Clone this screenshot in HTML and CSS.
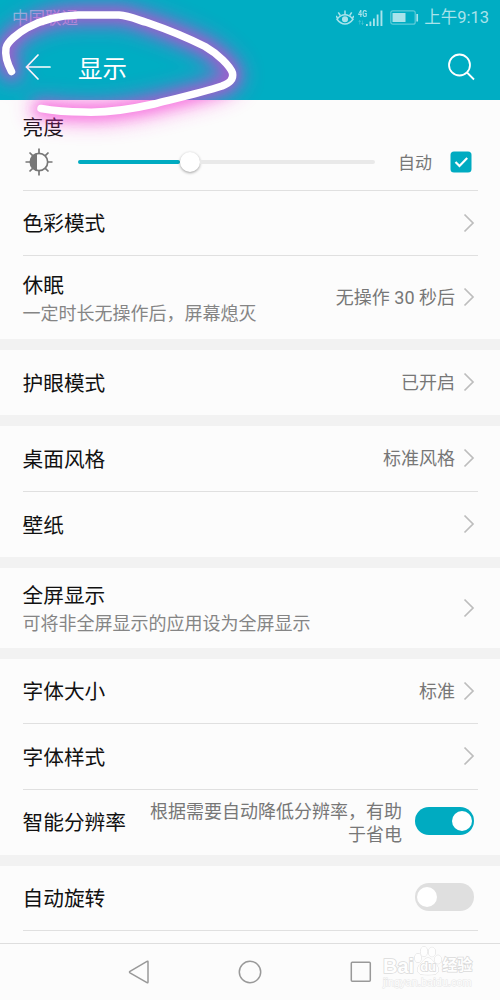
FILE: index.html
```html
<!DOCTYPE html>
<html lang="zh-CN">
<head>
<meta charset="utf-8">
<title>显示</title>
<link rel="stylesheet" href="styles.css">
</head>
<body>
<svg class="defs" width="0" height="0" aria-hidden="true">
  <symbol id="chevron" viewBox="0 0 12 20"><path d="M1.500 1.500 10 10 1.500 18.500" fill="none" stroke="#bdbdbd" stroke-width="1.700"/></symbol>
</svg>
<div class="screen">
  <header class="header">
    <div class="status">
      <span class="carrier">中国联通</span>
      <div class="indicators">
        <svg class="eye" width="18" height="16" viewBox="0 0 18 16" fill="none" stroke="currentColor" stroke-width="1.500">
          <path d="M1 9.200Q4.500 4.800 9 4.800T17 9.200Q13.500 14 9 14T1 9.200Z"/>
          <circle cx="9" cy="9.300" r="2.300" fill="currentColor"/>
          <path d="M9 4.500V.5M4.300 5.500 2.300 2.400M13.700 5.500l2-3.100M1.600 8 0 6M16.400 8 18 6"/>
        </svg>
        <div class="signal">
          <span class="network">4G</span>
          <svg width="25" height="16" viewBox="0 0 25 16" fill="currentColor">
            <path d="M8 14h1.800v2H8zM11.500 11.500h1.800V16h-1.800zM15 8.500h1.800V16H15zM18.700 4.500h1.800V16h-1.800zM22.500.5h1.900V16h-1.900z"/>
            <path d="M1.700 10.500v4M4.500 10.500v4M.7 12l1-1.500 1 1.500M3.500 13l1 1.500 1-1.500" fill="none" stroke="currentColor" stroke-width=".7" opacity=".4"/>
          </svg>
        </div>
        <svg class="battery" width="29" height="15" viewBox="0 0 29 15">
          <rect x=".8" y=".8" width="24.400" height="13.400" rx="2" fill="none" stroke="currentColor" stroke-width="1.200" opacity=".55"/>
          <path d="M2.500 3h13v9h-13z" fill="currentColor"/>
          <path d="M27.200 4v7.500" stroke="currentColor" stroke-width="1.700"/>
        </svg>
        <span class="clock">上午9:13</span>
      </div>
    </div>
    <div class="titlebar">
      <svg class="back" width="26" height="26" viewBox="0 0 26 26" fill="none" stroke="#fff" stroke-width="1.700" stroke-linecap="round"><path d="M13 1 1.500 13 13 25M1.500 13H25"/></svg>
      <h1 class="title">显示</h1>
      <svg class="search" width="28" height="28" viewBox="0 0 28 28" fill="none" stroke="#fff" stroke-width="1.800"><circle cx="12.500" cy="12" r="10.500"/><path d="m20 19.500 7 7"/></svg>
    </div>
  </header>

  <main class="settings">
    <section class="group">
      <div class="brightness">
        <span class="label">亮度</span>
        <div class="brightness-row">
          <svg class="sun" width="28" height="28" viewBox="0 0 28 28" fill="none" stroke="#777" stroke-width="1.700">
            <circle cx="14" cy="14" r="8.700"/>
            <path d="M12 5.300a9 9 0 0 0 0 17.400z" fill="#777" stroke="none"/>
            <path d="M14 .5v5M14 22.500v5M.5 14h5M22.500 14h5M4.500 4.500l3.200 3.200M20.300 20.300l3.200 3.200M4.500 23.500l3.200-3.200M20.300 7.700l3.200-3.200"/>
          </svg>
          <div class="slider"><div class="slider-fill"></div><div class="knob"></div><div class="slider-rest"></div></div>
          <span class="auto">自动</span>
          <svg class="checkbox" width="22" height="22" viewBox="0 0 22 22"><rect x=".5" y=".5" width="21" height="21" rx="3.500" fill="#00abc1"/><path d="m5.500 11 4 4 7.700-8" fill="none" stroke="#fff" stroke-width="2.200"/></svg>
        </div>
      </div>
      <div class="row"><span class="label">色彩模式</span><svg class="chevron"><use href="#chevron"/></svg></div>
      <div class="row row-sleep">
        <div class="stack"><span class="label">休眠</span><span class="hint">一定时长无操作后，屏幕熄灭</span></div>
        <span class="value">无操作 30 秒后</span><svg class="chevron"><use href="#chevron"/></svg>
      </div>
    </section>
    <section class="group">
      <div class="row"><span class="label">护眼模式</span><span class="value">已开启</span><svg class="chevron"><use href="#chevron"/></svg></div>
    </section>
    <section class="group">
      <div class="row"><span class="label">桌面风格</span><span class="value">标准风格</span><svg class="chevron"><use href="#chevron"/></svg></div>
      <div class="row"><span class="label">壁纸</span><svg class="chevron"><use href="#chevron"/></svg></div>
    </section>
    <section class="group">
      <div class="row row-full">
        <div class="stack"><span class="label">全屏显示</span><span class="hint">可将非全屏显示的应用设为全屏显示</span></div>
        <svg class="chevron"><use href="#chevron"/></svg>
      </div>
    </section>
    <section class="group">
      <div class="row"><span class="label">字体大小</span><span class="value">标准</span><svg class="chevron"><use href="#chevron"/></svg></div>
      <div class="row"><span class="label">字体样式</span><svg class="chevron"><use href="#chevron"/></svg></div>
      <div class="row row-resolution"><span class="label">智能分辨率</span><span class="value note">根据需要自动降低分辨率，有助于省电</span><span class="switch on"></span></div>
    </section>
    <section class="group last">
      <div class="row"><span class="label">自动旋转</span><span class="switch"></span></div>
    </section>
  </main>

  <nav class="navbar">
    <svg width="22" height="24" viewBox="0 0 22 24"><path d="M20 2v20q0 1.200-1 .6L2 12.800q-1-.8 0-1.500L19 1.400q1-.6 1 .6z"/></svg>
    <svg width="24" height="24" viewBox="0 0 24 24"><circle cx="12" cy="12" r="10.700"/></svg>
    <svg width="22" height="22" viewBox="0 0 22 22"><rect x="1.300" y="1.300" width="19" height="19" rx="1"/></svg>
  </nav>

  <div class="watermark">
    <div class="brand">
      <span class="bai">Bai</span>
      <span class="paw">
        <svg width="28" height="30" viewBox="0 0 28 30" fill="#fefefe" stroke="#dedede" stroke-width="1">
          <ellipse cx="4" cy="12" rx="3.200" ry="4.300"/><ellipse cx="10" cy="5.500" rx="3.300" ry="4.700"/><ellipse cx="18" cy="6" rx="3.300" ry="4.700"/><ellipse cx="24" cy="13.500" rx="3.200" ry="4.300"/>
          <path d="M14 12c-4 0-5 4-8 6.500-4 3.500-3 9.500 2 10 4 .4 8 .4 12 0 5-.5 6-6.500 2-10-3-2.500-4-6.500-8-6.500z"/>
        </svg>
        <span class="du">du</span>
      </span>
      <span class="jingyan">经验</span>
    </div>
    <span class="site">jingyan.baidu.com</span>
  </div>

  <svg class="scribble" width="300" height="170" viewBox="0 0 300 170" fill="none" stroke-linecap="round" stroke-linejoin="round">
    <defs>
      <path id="loop" d="M11.500 71.500C7 63 5 54 6 48C7 42 18 33 27 28C43 19 61 15.500 78 15H119C130 16 138 20 147 22.500C166 29 188 38 205 46.500C218 54 230 66 232.500 73C234 80 229 83 222 86C204 92 178 98 154 104C132 109 108 113 84 112Q60 112 41 108.500"/>
      <filter id="wide" filterUnits="userSpaceOnUse" x="-60" y="-60" width="420" height="290"><feGaussianBlur stdDeviation="10"/></filter>
      <filter id="near" filterUnits="userSpaceOnUse" x="-60" y="-60" width="420" height="290"><feGaussianBlur stdDeviation="6"/></filter>
    </defs>
    <use href="#loop" stroke="#f838d0" stroke-width="23" opacity=".5" filter="url(#wide)"/>
    <use href="#loop" stroke="#f032d4" stroke-width="13" opacity=".4" filter="url(#near)"/>
    <use href="#loop" stroke="#fff" stroke-width="7.500"/>
  </svg>
</div>
</body>
</html>
```

FILE: styles.css
```css
* { box-sizing: border-box; }
body { margin: 0; }
.defs { position: absolute; }
.screen {
  position: relative;
  display: flex;
  flex-direction: column;
  width: 500px;
  height: 1000px;
  overflow: hidden;
  background: #fcfcfc;
  font-family: Roboto, "Noto Sans CJK SC", sans-serif;
  color: #111;
}
.header { height: 100px; background: #00adc3; flex: none; }
.status {
  display: flex;
  justify-content: space-between;
  align-items: center;
  height: 34px;
  padding: 1px 11px 0 12px;
  color: #a9e3eb;
}
.carrier { padding-top: 2px; font-size: 16.500px; line-height: 24px; color: #7fc7dc; }
.indicators { display: flex; align-items: center; }
.eye { margin-right: 4px; }
.signal { display: grid; margin-right: 7px; }
.signal > * { grid-area: 1 / 1; }
.network { font-size: 9px; line-height: 8px; font-weight: 700; transform: scaleX(.8); transform-origin: left; }
.battery { margin-right: 5px; }
.clock { font-size: 16.500px; line-height: 24px; white-space: nowrap; }
.titlebar { display: flex; align-items: center; height: 66px; padding: 0 25px 0 25px; }
.title { flex: 1; margin: 0 0 0 27px; padding-top: 5px; font-size: 24.500px; line-height: 36px; font-weight: 400; color: #fff; }

.settings { display: flex; flex-direction: column; gap: 11px; height: 843px; background: #f2f2f2; flex: none; }
.group { background: #fcfcfc; padding: 0 22px 0 22.500px; }
.group.last { flex: 1; }
.brightness { height: 91px; padding-top: 12px; border-bottom: 1px solid #e0e0e0; }
.brightness .label { display: block; padding-top: 1px; height: 30px; }
.brightness-row { display: flex; align-items: center; height: 40px; padding-left: 2.500px; }
.slider { display: flex; align-items: center; width: 297px; margin-left: 25px; }
.slider-fill { width: 102px; height: 4px; background: #00abc1; border-radius: 2px; }
.knob { width: 20px; height: 20px; border-radius: 50%; background: #fff; box-shadow: 0 1px 3px rgba(0,0,0,.38); flex: none; }
.slider-rest { flex: 1; height: 4px; background: #e9e9e9; border-radius: 0 2px 2px 0; }
.auto { margin-left: 23px; margin-bottom: 1px; font-size: 17px; color: #777; }
.checkbox { margin-left: 18px; }
.label { padding-top: 2px; font-size: 20.700px; line-height: 30px; white-space: nowrap; }
.row { display: flex; align-items: center; height: 65px; }
.row + .row { height: 66px; border-top: 1px solid #e0e0e0; }
.brightness + .row { height: 64px; }
.row + .row.row-sleep { height: 84px; }
.group:nth-child(5) .row:first-child { height: 64px; }
.group:nth-child(5) .row-resolution { padding-bottom: 1px; }
.row-full { height: 80px; }
.stack { display: flex; flex-direction: column; }
.hint { font-size: 18px; line-height: 26px; color: #858585; white-space: nowrap; }
.value { margin-left: auto; padding-top: 1px; font-size: 18px; line-height: 26px; color: #777; white-space: nowrap; }
.chevron { width: 12px; height: 20px; margin: 0 3px 1px 8px; flex: none; }
.label + .chevron, .stack + .chevron { margin-left: auto; }
.note { width: 256px; padding: 2px 1px 0 0; line-height: 23px; text-align: right; white-space: normal; }
.switch { display: flex; width: 59px; height: 28px; padding: 4px 2px; margin-left: auto; margin-bottom: 3px; margin-right: 4px; border-radius: 14px; background: #dfdfdf; flex: none; }
.switch::before { content: ""; width: 20px; height: 20px; border-radius: 50%; background: #fff; }
.switch.on { justify-content: flex-end; margin-left: 12px; background: #00abc1; }
.group.last .row { border-bottom: 1px solid #e0e0e0; }

.navbar { display: flex; justify-content: center; align-items: center; gap: 88px; height: 57px; border-top: 1px solid #dedede; }
.navbar svg { fill: none; stroke: #999; stroke-width: 1.500; }

.watermark { position: absolute; left: 383px; top: 945px; width: 92px; color: #fefefe; -webkit-text-stroke: 1.500px #dadada; paint-order: stroke fill; }
.brand { display: flex; align-items: flex-end; height: 31px; }
.bai { font: 700 20px/20px "Liberation Sans", sans-serif; }
.paw { display: grid; place-items: end center; }
.paw > * { grid-area: 1 / 1; }
.du { font: 700 13px/18px "Liberation Sans", sans-serif; }
.jingyan { font-size: 15px; line-height: 22px; font-weight: 700; white-space: nowrap; }
.site { display: block; font: 11px/13px "Liberation Sans", sans-serif; white-space: nowrap; -webkit-text-stroke: 1px #e6e6e6; }
.scribble { position: absolute; left: 0; top: 0; }
```
